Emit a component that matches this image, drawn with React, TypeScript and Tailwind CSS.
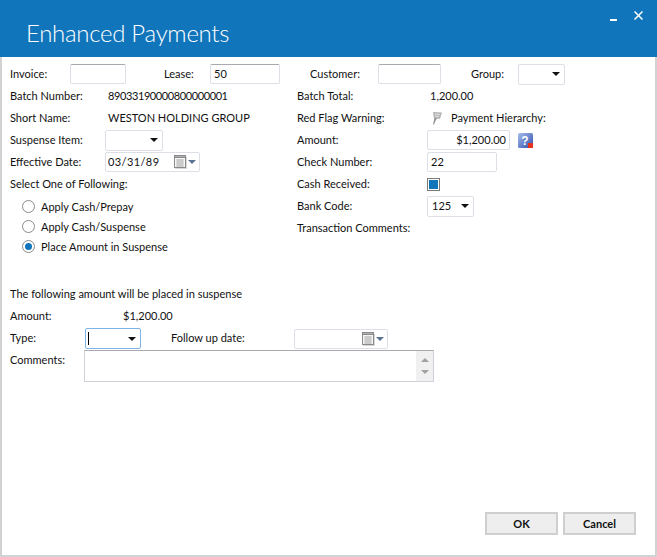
// App.tsx
import React from 'react';

const Caret = () => (
  <svg width="8" height="4" viewBox="0 0 8 4" className="shrink-0">
    <path d="M0 0h8L4 4z" fill="#111" />
  </svg>
);

const Calendar = () => (
  <svg width="22" height="14" viewBox="0 0 22 14" className="shrink-0">
    <rect x="0.5" y="0.5" width="11" height="12" fill="#f6f6f6" stroke="#8a8a8a" />
    <rect x="0.5" y="0.5" width="11" height="2" fill="#b0b0b0" stroke="#8a8a8a" />
    <path d="M2 5h8M2 7h8M2 9h8M2 11h8M4 4v8M6 4v8M8 4v8" stroke="#b4b4b4" strokeWidth="0.8" />
    <path d="M1 13.5h12M12.5 2v12" stroke="#d8d8d8" />
    <path d="M14 5h8l-4 4z" fill="#5a7391" />
  </svg>
);

const Flag = () => (
  <svg width="13" height="14" viewBox="0 0 13 14" className="shrink-0">
    <path d="M3 1l9 0.5-2 6.5-2-.5-1.5 1L4 7.5z" fill="#b5b5b5" />
    <path d="M5 3l5 .5M5 5l4 .5" stroke="#e6e6e6" />
    <path d="M4.5 7l2 .5-2.5 6H3z" fill="#8f8f8f" />
  </svg>
);

const Help = () => (
  <svg width="15" height="15" viewBox="0 0 15 15" className="shrink-0">
    <defs>
      <linearGradient id="helpFill" x1="0" y1="0" x2="1" y2="1">
        <stop offset="0" stopColor="#a9bdea" />
        <stop offset="1" stopColor="#2f4fae" />
      </linearGradient>
    </defs>
    <rect width="15" height="15" rx="1.5" fill="url(#helpFill)" />
    <text x="7" y="12" textAnchor="middle" fontSize="12" fontWeight="700" fill="#fff" fontFamily="Liberation Sans, sans-serif">?</text>
    <rect x="10" y="10" width="5" height="5" fill="#e8331c" />
  </svg>
);

// text sits 1px high of the box centre in the original
const Txt = ({ className = '', children }: { className?: string; children?: React.ReactNode }) => (
  <span className={`pb-[2px] ${className}`}>{children}</span>
);

const Box = ({ w, value, right, dark }: { w: string; value?: string; right?: boolean; dark?: boolean }) => (
  <div className={`${w} h-5 flex items-center px-[3px] bg-white border rounded-[2px] border-[#dcdfe6] ${right ? 'justify-end' : ''} ${dark ? 'border-t-[#a9a9b0]' : ''}`}>
    <Txt>{value}</Txt>
  </div>
);

const Select = ({ w, value }: { w: string; value?: string }) => (
  <div className={`${w} h-[21px] flex items-center justify-between pl-1 pr-1 bg-white border rounded-[2px] border-[#dcdfe6]`}>
    <Txt>{value}</Txt>
    <Caret />
  </div>
);

const DateBox = ({ w, value }: { w: string; value?: string }) => (
  <div className={`${w} h-5 flex items-center justify-between pl-[2px] pr-[3px] bg-white border rounded-[2px] border-[#dcdfe6]`}>
    <Txt className="tracking-[0.4px]">{value}</Txt>
    <Calendar />
  </div>
);

const Radio = ({ label, checked }: { label: string; checked?: boolean }) => (
  <div className="h-5 flex items-center pl-[12px]">
    <span className="w-[13px] h-[13px] rounded-full border border-[#8a8a8a] bg-white flex items-center justify-center">
      {checked && <span className="w-[7px] h-[7px] rounded-full bg-[#1175bc]" />}
    </span>
    <span className="ml-[6px]">{label}</span>
  </div>
);

const Row = ({ label, w = 'w-[95px]', children }: { label: string; w?: string; children?: React.ReactNode }) => (
  <div className="h-[22px] flex items-center">
    <Txt className={`${w} shrink-0`}>{label}</Txt>
    {children}
  </div>
);

export default function App() {
  return (
    <div className="w-[657px] h-[557px] flex flex-col bg-white text-[11px] leading-none text-[#111] font-['Lato','Liberation_Sans',sans-serif]">
      <header className="h-[57px] shrink-0 bg-[#1175bc] flex text-white">
        <h1 className="pl-[26px] pt-[18px] text-[24px] leading-[30px] font-light tracking-[-0.3px] font-['Lato','Open_Sans',sans-serif]">Enhanced Payments</h1>
        <div className="ml-auto flex items-start gap-[17px] pr-[14px] pt-[11px]">
          <span className="w-[7px] h-[2px] bg-white mt-[8px]" />
          <svg width="9" height="9" viewBox="0 0 9 9"><path d="M.5.5l8 8M8.5.5l-8 8" stroke="#fff" strokeWidth="1.5" /></svg>
        </div>
      </header>

      <main className="flex-1 flex flex-col border-x-2 border-b-2 border-[#d2d2d2] pl-2 pr-[19px]">
        {/* top filter row */}
        <div className="h-[20px] mt-[7px] flex items-center">
          <Txt className="w-[60px]">Invoice:</Txt>
          <Box w="w-[56px]" dark />
          <Txt className="w-[46px] ml-[38px]">Lease:</Txt>
          <Box w="w-[70px]" value="50" dark />
          <Txt className="w-[68px] ml-[30px]">Customer:</Txt>
          <Box w="w-[63px]" dark />
          <Txt className="w-[47px] ml-[30px]">Group:</Txt>
          <Select w="w-[47px]" />
        </div>

        <div className="flex mt-[1px]">
          {/* left column */}
          <div className="w-[287px] shrink-0 flex flex-col">
            <Row label="Batch Number:" w="w-[98px]"><Txt className="tracking-[-0.4px]">89033190000800000001</Txt></Row>
            <Row label="Short Name:" w="w-[98px]"><Txt>WESTON HOLDING GROUP</Txt></Row>
            <Row label="Suspense Item:"><Select w="w-[58px]" /></Row>
            <Row label="Effective Date:"><DateBox w="w-[95px]" value="03/31/89" /></Row>
            <Row label="Select One of Following:" w="w-auto" />
            <div className="flex flex-col mt-[1px]">
              <Radio label="Apply Cash/Prepay" />
              <Radio label="Apply Cash/Suspense" />
              <Radio label="Place Amount in Suspense" checked />
            </div>
          </div>

          {/* right column */}
          <div className="flex-1 flex flex-col">
            <Row label="Batch Total:" w="w-[133px]"><Txt>1,200.00</Txt></Row>
            <Row label="Red Flag Warning:" w="w-[133px]">
              <Flag />
              <Txt className="ml-[8px]">Payment Hierarchy:</Txt>
            </Row>
            <Row label="Amount:" w="w-[130px]">
              <Box w="w-[83px]" value="$1,200.00" right />
              <span className="ml-2"><Help /></span>
            </Row>
            <Row label="Check Number:" w="w-[130px]"><Box w="w-[70px]" value="22" /></Row>
            <Row label="Cash Received:" w="w-[130px]">
              <span className="w-[13px] h-[13px] border border-[#7a7a7a] p-[1px] bg-white">
                <span className="block w-full h-full bg-[#1175bc]" />
              </span>
            </Row>
            <Row label="Bank Code:" w="w-[130px]"><Select w="w-[47px]" value="125" /></Row>
            <Row label="Transaction Comments:" w="w-auto" />
          </div>
        </div>

        {/* suspense section */}
        <p className="mt-[32px] h-[14px]">The following amount will be placed in suspense</p>
        <div className="h-[14px] mt-[7px] flex items-center">
          <Txt className="w-[113px]">Amount:</Txt>
          <Txt>$1,200.00</Txt>
        </div>
        <div className="h-[21px] mt-[5px] flex items-center">
          <Txt className="w-[75px]">Type:</Txt>
          <div className="w-[56px] h-[21px] flex items-center justify-between pl-[2px] pr-1 bg-white border rounded-[2px] border-[#7eb4ea]">
            <span className="w-px h-[13px] bg-black" />
            <Caret />
          </div>
          <Txt className="w-[123px] ml-[30px]">Follow up date:</Txt>
          <DateBox w="w-[94px]" />
        </div>
        <div className="flex mt-[1px]">
          <span className="w-[74px] pt-1">Comments:</span>
          <div className="w-[350px] h-[32px] flex justify-end border border-[#d0d0d8] border-t-[#a9a9b0] bg-white">
            <div className="w-[17px] h-full bg-[#f0f0f0] flex flex-col items-center justify-between py-[7px]">
              <svg width="8" height="4" viewBox="0 0 8 4"><path d="M0 4h8L4 0z" fill="#a0a0a0" /></svg>
              <svg width="8" height="4" viewBox="0 0 8 4"><path d="M0 0h8L4 4z" fill="#a0a0a0" /></svg>
            </div>
          </div>
        </div>

        {/* dialog buttons */}
        <div className="mt-auto mb-5 flex justify-end gap-[5px]">
          <button className="w-[73px] h-[23px] bg-[#eeeeee] border-2 border-[#cfcfcf] font-bold">OK</button>
          <button className="w-[73px] h-[23px] bg-[#eeeeee] border-2 border-[#cfcfcf] font-bold">Cancel</button>
        </div>
      </main>
    </div>
  );
}
